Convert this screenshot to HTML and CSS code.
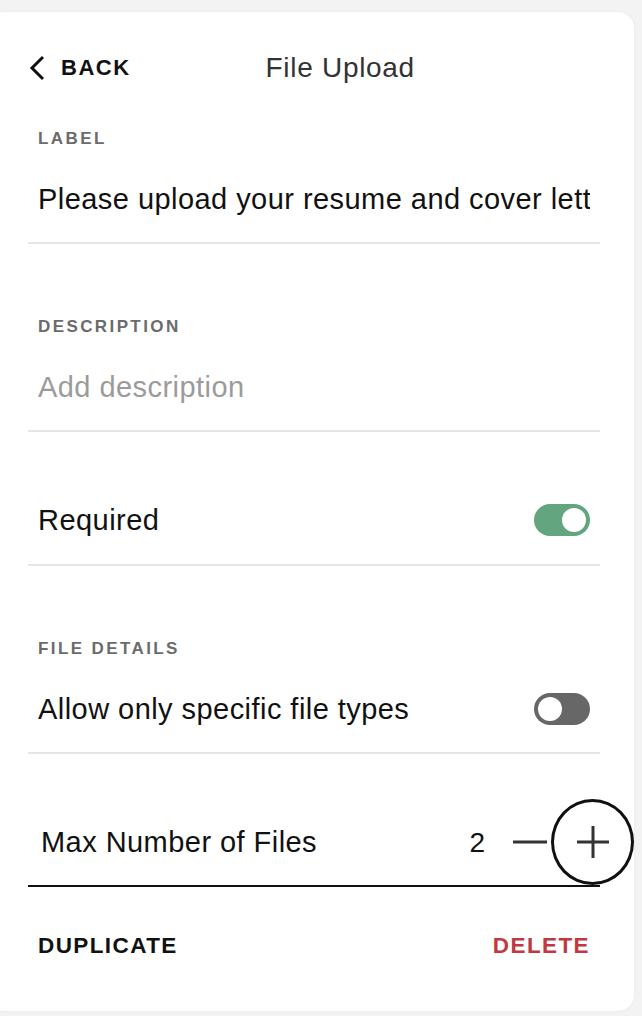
FILE: index.html
```html
<!DOCTYPE html>
<html lang="en">
<head>
<meta charset="utf-8">
<title>File Upload</title>
<link rel="stylesheet" href="styles.css">
</head>
<body>
<div class="card">
  <header class="topbar">
    <button class="back" type="button">
      <svg class="chevron" width="18" height="26" viewBox="0 0 18 26" aria-hidden="true"><path d="M15 2 L4 13 L15 24" fill="none" stroke="#111" stroke-width="3"/></svg>
      <span>BACK</span>
    </button>
    <h1 class="title">File Upload</h1>
  </header>

  <section class="field field-first">
    <div class="caption">LABEL</div>
    <div class="value">Please upload your resume and cover letter</div>
  </section>

  <section class="field field-gap">
    <div class="caption">DESCRIPTION</div>
    <div class="value placeholder">Add description</div>
  </section>

  <section class="row-field">
    <div class="row">
      <span class="text">Required</span>
      <span class="toggle on"><span class="knob"></span></span>
    </div>
  </section>

  <section class="field field-gap field-details">
    <div class="caption">FILE DETAILS</div>
    <div class="row">
      <span class="text">Allow only specific file types</span>
      <span class="toggle off"><span class="knob"></span></span>
    </div>
  </section>

  <section class="stepper-field">
    <div class="row stepper-row">
      <span class="text">Max Number of Files</span>
      <div class="stepper">
        <span class="count">2</span>
        <button class="minus" type="button" aria-label="Decrease"><svg width="34" height="4" viewBox="0 0 34 4"><rect x="0" y="0.5" width="34" height="3" fill="#333"/></svg></button>
        <button class="plus" type="button" aria-label="Increase"><svg width="32" height="32" viewBox="0 0 32 32"><rect x="0" y="14.5" width="32" height="3" fill="#333"/><rect x="14.5" y="0" width="3" height="32" fill="#333"/></svg></button>
      </div>
    </div>
  </section>

  <footer class="actions">
    <button class="action" type="button">DUPLICATE</button>
    <button class="action danger" type="button">DELETE</button>
  </footer>
</div>
</body>
</html>
```

FILE: styles.css
```css
* { box-sizing: border-box; }

html, body {
  margin: 0;
  padding: 0;
  background: #f3f3f3;
  height: 100%;
  overflow: hidden;
}

body {
  font-family: "Liberation Sans", Arial, sans-serif;
  color: #111;
}

.card {
  margin: 12px 0 0 -12px;
  width: 646px;
  height: 999px;
  background: #fff;
  border-radius: 16px;
  box-shadow: 0 0 3px rgba(0, 0, 0, 0.06);
  padding: 0 34px 0 40px;
  overflow: hidden;
}

button {
  font-family: inherit;
  background: none;
  border: 0;
  padding: 0;
  margin: 0;
  cursor: pointer;
  color: inherit;
}

.topbar {
  display: flex;
  align-items: center;
  height: 40px;
  margin-top: 36px;
}

.back {
  display: flex;
  align-items: center;
  gap: 15px;
  font-size: 22px;
  font-weight: 700;
  letter-spacing: 1.5px;
  color: #111;
}

.chevron { display: block; }

.title {
  margin: 0 0 0 135px;
  font-size: 28px;
  font-weight: 400;
  letter-spacing: 0.7px;
  color: #333;
}

.field,
.row-field,
.stepper-field {
  border-bottom: 2px solid #e6e6e6;
  padding-bottom: 18px;
}

.field-first { padding-top: 41px; }
.field-gap { padding-top: 73px; }
.field-details { padding-bottom: 18px; }
.row-field { padding-top: 63px; padding-bottom: 19px; }

.caption {
  padding: 0 10px;
  height: 20px;
  line-height: 20px;
  font-size: 17px;
  font-weight: 700;
  letter-spacing: 2.4px;
  color: #6b6b6b;
  margin-bottom: 25px;
}

.value {
  margin: 0 10px;
  height: 50px;
  line-height: 51px;
  font-size: 29px;
  letter-spacing: 0.45px;
  white-space: nowrap;
  overflow: hidden;
}

.placeholder { color: #9b9b9b; }

.row {
  display: flex;
  align-items: center;
  justify-content: space-between;
  height: 50px;
  padding: 0 10px;
}

.text {
  font-size: 29px;
  letter-spacing: 0.45px;
  white-space: nowrap;
  padding-top: 1px;
}

.toggle {
  display: flex;
  align-items: center;
  width: 56px;
  height: 32px;
  border-radius: 16px;
  padding: 4px;
}

.toggle.on { background: #62a57e; justify-content: flex-end; }
.toggle.off { background: #676767; justify-content: flex-start; }

.knob {
  width: 24px;
  height: 24px;
  border-radius: 50%;
  background: #fff;
}

.stepper-field {
  border-bottom-color: #111;
  padding-top: 63px;
  padding-bottom: 18px;
}

.stepper-row { padding-left: 13px; }

.stepper {
  display: flex;
  align-items: center;
  margin-right: -44px;
}

.count {
  font-size: 28px;
  margin-right: 28px;
  padding-top: 1px;
}

.minus {
  display: flex;
  align-items: center;
  margin-right: 4px;
}

.minus svg, .plus svg { display: block; }

.plus {
  width: 83px;
  height: 86px;
  border: 3px solid #111;
  border-radius: 50%;
  display: flex;
  align-items: center;
  justify-content: center;
  flex-shrink: 0;
}

.actions {
  display: flex;
  align-items: center;
  justify-content: space-between;
  height: 40px;
  margin-top: 39px;
  padding: 0 10px;
}

.action {
  font-size: 22.5px;
  font-weight: 700;
  letter-spacing: 1.4px;
  color: #111;
}

.action.danger { color: #c0393f; }
```
